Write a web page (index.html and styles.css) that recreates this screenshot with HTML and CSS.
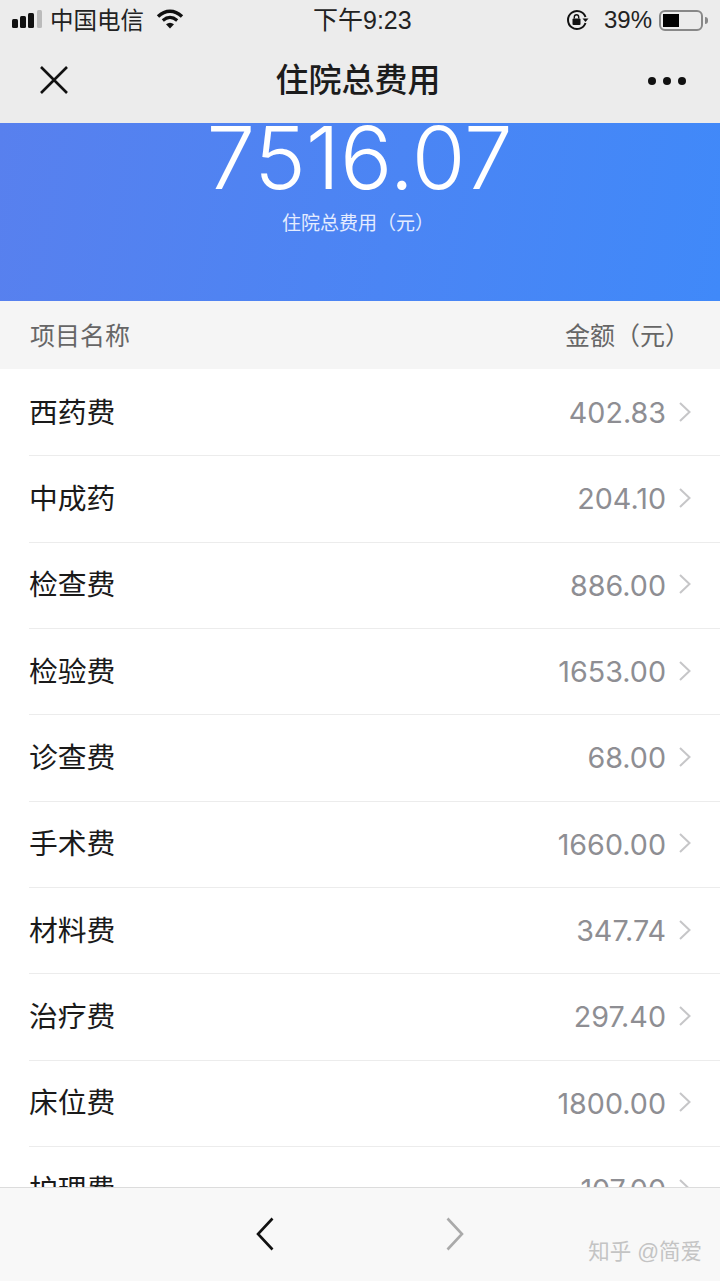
FILE: index.html
```html
<!DOCTYPE html>
<html lang="zh-CN">
<head>
    <meta charset="UTF-8">
    <meta name="viewport" content="width=device-width, initial-scale=1.0">
    <title>住院总费用</title>
    <link rel="stylesheet" href="styles.css">
</head>
<body>
    <svg class="defs" width="0" height="0">
        <symbol id="chev" viewBox="0 0 14 22">
            <path d="M2 2l9.500 9L2 20" fill="none" stroke="#c6c6c8" stroke-width="2"/>
        </symbol>
    </svg>
    <div class="page">
        <div class="topbar">
            <div class="status">
                <div class="status-left">
                    <div class="signal"><i class="b1"></i><i class="b2"></i><i class="b3"></i><i class="b4"></i></div>
                    <span class="carrier">中国电信</span>
                    <svg class="wifi" width="28" height="20" viewBox="0 0 28 20">
                        <path d="M2 7.500C9.500.5 18.500.5 26 7.500" fill="none" stroke="#111" stroke-width="3.400"/>
                        <path d="M6.800 11.500c4.500-3.800 9.900-3.800 14.400 0" fill="none" stroke="#111" stroke-width="3.200"/>
                        <path d="M10 15.200c2.600-2 5.400-2 8 0L14 19.500z" fill="#111"/>
                    </svg>
                </div>
                <div class="clock">下午9:23</div>
                <div class="status-right">
                    <svg class="lock" width="24" height="22" viewBox="0 0 24 22">
                        <path d="M19.500 8A9 9 0 1 0 19.500 14" fill="none" stroke="#111" stroke-width="2"/>
                        <path d="M16.500 9.500h6l-3 3.500z" fill="#111"/>
                        <rect x="6.500" y="9.500" width="8" height="6.500" rx="1" fill="#111"/>
                        <path d="M8.300 9.500V8a2.200 2.200 0 0 1 4.400 0v1.500" fill="none" stroke="#111" stroke-width="1.400"/>
                    </svg>
                    <span class="percent">39%</span>
                    <div class="battery"><div class="battery-fill"></div></div>
                    <div class="battery-tip"></div>
                </div>
            </div>
            <div class="nav">
                <svg class="close" width="30" height="30" viewBox="0 0 30 30">
                    <path d="M2 2l26 26M28 2L2 28" fill="none" stroke="#111" stroke-width="2.600"/>
                </svg>
                <div class="nav-title">住院总费用</div>
                <div class="more"><i></i><i></i><i></i></div>
            </div>
        </div>

        <div class="hero">
            <div class="total">7516.07</div>
            <div class="total-label">住院总费用（元）</div>
        </div>

        <div class="table-head">
            <span>项目名称</span>
            <span>金额（元）</span>
        </div>

        <div class="list">
            <div class="row"><span class="name">西药费</span><span class="amount">402.83</span><svg class="chev"><use href="#chev"/></svg></div>
            <div class="row"><span class="name">中成药</span><span class="amount">204.10</span><svg class="chev"><use href="#chev"/></svg></div>
            <div class="row"><span class="name">检查费</span><span class="amount">886.00</span><svg class="chev"><use href="#chev"/></svg></div>
            <div class="row"><span class="name">检验费</span><span class="amount">1653.00</span><svg class="chev"><use href="#chev"/></svg></div>
            <div class="row"><span class="name">诊查费</span><span class="amount">68.00</span><svg class="chev"><use href="#chev"/></svg></div>
            <div class="row"><span class="name">手术费</span><span class="amount">1660.00</span><svg class="chev"><use href="#chev"/></svg></div>
            <div class="row"><span class="name">材料费</span><span class="amount">347.74</span><svg class="chev"><use href="#chev"/></svg></div>
            <div class="row"><span class="name">治疗费</span><span class="amount">297.40</span><svg class="chev"><use href="#chev"/></svg></div>
            <div class="row"><span class="name">床位费</span><span class="amount">1800.00</span><svg class="chev"><use href="#chev"/></svg></div>
            <div class="row"><span class="name">护理费</span><span class="amount">107.00</span><svg class="chev"><use href="#chev"/></svg></div>
        </div>

        <div class="bottombar">
            <svg class="arrow-back" width="20" height="34" viewBox="0 0 20 34">
                <path d="M17.500 1.500L3 17l14.500 15.500" fill="none" stroke="#111" stroke-width="2.600"/>
            </svg>
            <svg class="arrow-next" width="20" height="34" viewBox="0 0 20 34">
                <path d="M2.500 1.500L17 17 2.500 32.500" fill="none" stroke="#aaa" stroke-width="2.600"/>
            </svg>
            <div class="watermark">知乎 @简爱</div>
        </div>
    </div>
</body>
</html>
```

FILE: styles.css
```css
html, body {
    margin: 0;
    padding: 0;
}
body {
    font-family: "Liberation Sans", "Noto Sans CJK SC", sans-serif;
    background-color: white;
}
.defs {
    position: absolute;
}
.page {
    width: 720px;
    height: 1281px;
    display: flex;
    flex-direction: column;
    overflow: hidden;
}
.topbar {
    background-color: #ececec;
    height: 123px;
    flex: none;
}
.status {
    height: 40px;
    display: flex;
    align-items: center;
    justify-content: space-between;
    color: #222;
    font-size: 23px;
    position: relative;
}
.status-left {
    display: flex;
    align-items: center;
    padding-left: 12px;
}
.signal {
    display: flex;
    align-items: flex-end;
    gap: 2.700px;
    height: 18px;
    margin-bottom: 2px;
}
.signal i {
    display: block;
    width: 5.500px;
    background-color: #111;
    border-radius: 1.500px;
}
.signal .b1 { height: 9px; }
.signal .b2 { height: 12px; }
.signal .b3 { height: 15px; }
.signal .b4 { height: 18px; background-color: #bbb; }
.carrier {
    margin-left: 8px;
    margin-bottom: 3px;
    font-size: 23.500px;
}
.wifi {
    margin-left: 12px;
    margin-top: -3px;
}
.clock {
    position: absolute;
    left: 313px;
    top: 3px;
    line-height: 34px;
    font-size: 25px;
}
.status-right {
    display: flex;
    align-items: center;
    padding-right: 12px;
}
.percent {
    margin-left: 14px;
    font-size: 24px;
}
.battery {
    width: 44px;
    height: 21px;
    border: 2px solid #888;
    border-radius: 6px;
    margin-left: 7px;
    padding: 2px;
    box-sizing: border-box;
}
.battery-fill {
    width: 16px;
    height: 100%;
    background-color: #000;
}
.battery-tip {
    width: 3px;
    height: 7px;
    margin-left: 2px;
    background-color: #888;
    border-radius: 0 3px 3px 0;
}
.nav {
    height: 83px;
    display: flex;
    align-items: center;
    justify-content: space-between;
    padding: 0 34px 4px 39px;
    box-sizing: border-box;
    position: relative;
}
.close {
    width: 30px;
    height: 30px;
}
.nav-title {
    position: absolute;
    left: -4px;
    right: 0;
    top: 16px;
    text-align: center;
    font-size: 33px;
    line-height: 50px;
    font-weight: 500;
    color: #1c1c1c;
}
.more {
    display: flex;
    gap: 7px;
    margin-top: 2px;
}
.more i {
    display: block;
    width: 8px;
    height: 8px;
    border-radius: 50%;
    background-color: #111;
}
.hero {
    height: 178px;
    flex: none;
    box-sizing: border-box;
    background: linear-gradient(100deg, #5880ee, #4089f9);
    color: white;
    text-align: center;
    overflow: hidden;
    padding-top: 2px;
}
.total {
    font-family: Inter, sans-serif;
    font-weight: 300;
    font-size: 87px;
    line-height: 66px;
    margin-left: -1px;
}
.total-label {
    font-size: 19px;
    line-height: 26px;
    margin-top: 20px;
    margin-left: -4px;
    color: #e4ecff;
}
.table-head {
    height: 68px;
    flex: none;
    background-color: #f5f5f5;
    display: flex;
    align-items: center;
    justify-content: space-between;
    padding: 0 30px 3px 30px;
    box-sizing: border-box;
    font-size: 25px;
    color: #666;
}
.list {
    flex: 1;
    overflow: hidden;
    background-color: white;
    padding: 1px 0 0 29px;
}
.row {
    height: 86.330px;
    box-sizing: border-box;
    border-bottom: 1px solid #ececec;
    display: flex;
    align-items: center;
    padding: 0 28px 0 0;
}
.name {
    flex: 1;
    font-size: 28.800px;
    color: #1a1a1a;
    margin-bottom: 5px;
}
.amount {
    font-family: Inter, sans-serif;
    font-size: 28.700px;
    color: #8e8e93;
}
.chev {
    width: 14px;
    height: 22px;
    margin-left: 12px;
    margin-top: -2px;
}
.bottombar {
    height: 94px;
    flex: none;
    box-sizing: border-box;
    background-color: #f8f8f8;
    border-top: 1px solid #dcdcdc;
    position: relative;
    display: flex;
    align-items: center;
    justify-content: center;
    gap: 170px;
    padding-bottom: 2px;
}
.arrow-back,
.arrow-next {
    width: 20px;
    height: 34px;
}
.watermark {
    position: absolute;
    right: 18px;
    top: 46px;
    font-size: 21.500px;
    color: #c4c4c4;
}
```
